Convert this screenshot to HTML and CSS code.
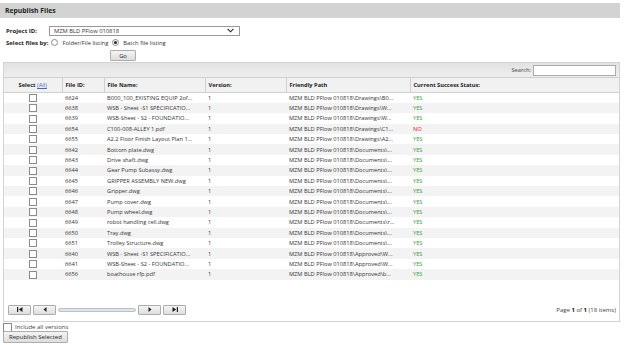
FILE: index.html
```html
<!DOCTYPE html>
<html lang="en">
<head>
    <meta charset="UTF-8">
    <title>Republish Files</title>
    <link rel="stylesheet" href="styles.css">
</head>
<body>

<div class="page-title">Republish Files</div>

<div class="filters">
    <div class="filter-row">
        <span class="filter-label">Project ID:</span>
        <div class="project-select">
            <span>MZM BLD PFlow 010818</span>
            <svg width="7" height="5" viewBox="0 0 7 5"><path d="M0.6 0.8 L3.5 3.8 L6.4 0.8" fill="none" stroke="#222" stroke-width="1.1"/></svg>
        </div>
    </div>
    <div class="filter-row mode-row">
        <span class="filter-label">Select files by:</span>
        <span class="radio"></span><span class="radio-text">Folder/File listing</span>
        <span class="radio checked"></span><span class="radio-text">Batch file listing</span>
    </div>
    <div class="go-row">
        <button class="btn go">Go</button>
    </div>
</div>

<div class="grid">
    <div class="grid-toolbar">
        <span>Search:</span>
        <input type="text" class="search-input">
    </div>

    <table class="files">
        <colgroup>
            <col style="width:58px">
            <col style="width:42px">
            <col style="width:101px">
            <col style="width:81px">
            <col style="width:124px">
            <col>
        </colgroup>
        <thead>
            <tr>
                <th class="center">Select <a href="#">(All)</a></th>
                <th>File ID:</th>
                <th>File Name:</th>
                <th>Version:</th>
                <th>Friendly Path</th>
                <th>Current Success Status:</th>
            </tr>
        </thead>
        <tbody>
            <tr><td class="center"><span class="check"></span></td><td>6624</td><td>B000_100_EXISTING EQUIP 2of...</td><td>1</td><td>MZM BLD PFlow 010818\Drawings\B0...</td><td class="yes">YES</td></tr>
            <tr><td class="center"><span class="check"></span></td><td>6638</td><td>WSB - Sheet -S1 SPECIFICATIO...</td><td>1</td><td>MZM BLD PFlow 010818\Drawings\W...</td><td class="yes">YES</td></tr>
            <tr><td class="center"><span class="check"></span></td><td>6639</td><td>WSB-Sheet - S2 - FOUNDATIO...</td><td>1</td><td>MZM BLD PFlow 010818\Drawings\W...</td><td class="yes">YES</td></tr>
            <tr><td class="center"><span class="check"></span></td><td>6654</td><td>C100-008-ALLEY 1.pdf</td><td>1</td><td>MZM BLD PFlow 010818\Drawings\C1...</td><td class="no">NO</td></tr>
            <tr><td class="center"><span class="check"></span></td><td>6655</td><td>A2.2 Floor Finish Layout Plan 1...</td><td>1</td><td>MZM BLD PFlow 010818\Drawings\A2...</td><td class="yes">YES</td></tr>
            <tr><td class="center"><span class="check"></span></td><td>6642</td><td>Bottom plate.dwg</td><td>1</td><td>MZM BLD PFlow 010818\Documents\...</td><td class="yes">YES</td></tr>
            <tr><td class="center"><span class="check"></span></td><td>6643</td><td>Drive shaft.dwg</td><td>1</td><td>MZM BLD PFlow 010818\Documents\...</td><td class="yes">YES</td></tr>
            <tr><td class="center"><span class="check"></span></td><td>6644</td><td>Gear Pump Subassy.dwg</td><td>1</td><td>MZM BLD PFlow 010818\Documents\...</td><td class="yes">YES</td></tr>
            <tr><td class="center"><span class="check"></span></td><td>6645</td><td>GRIPPER ASSEMBLY NEW.dwg</td><td>1</td><td>MZM BLD PFlow 010818\Documents\...</td><td class="yes">YES</td></tr>
            <tr><td class="center"><span class="check"></span></td><td>6646</td><td>Gripper.dwg</td><td>1</td><td>MZM BLD PFlow 010818\Documents\...</td><td class="yes">YES</td></tr>
            <tr><td class="center"><span class="check"></span></td><td>6647</td><td>Pump cover.dwg</td><td>1</td><td>MZM BLD PFlow 010818\Documents\...</td><td class="yes">YES</td></tr>
            <tr><td class="center"><span class="check"></span></td><td>6648</td><td>Pump wheel.dwg</td><td>1</td><td>MZM BLD PFlow 010818\Documents\...</td><td class="yes">YES</td></tr>
            <tr><td class="center"><span class="check"></span></td><td>6649</td><td>robot handling cell.dwg</td><td>1</td><td>MZM BLD PFlow 010818\Documents\r...</td><td class="yes">YES</td></tr>
            <tr><td class="center"><span class="check"></span></td><td>6650</td><td>Tray.dwg</td><td>1</td><td>MZM BLD PFlow 010818\Documents\...</td><td class="yes">YES</td></tr>
            <tr><td class="center"><span class="check"></span></td><td>6651</td><td>Trolley Structure.dwg</td><td>1</td><td>MZM BLD PFlow 010818\Documents\...</td><td class="yes">YES</td></tr>
            <tr><td class="center"><span class="check"></span></td><td>6640</td><td>WSB - Sheet -S1 SPECIFICATIO...</td><td>1</td><td>MZM BLD PFlow 010818\Approved\W...</td><td class="yes">YES</td></tr>
            <tr><td class="center"><span class="check"></span></td><td>6641</td><td>WSB-Sheet - S2 - FOUNDATIO...</td><td>1</td><td>MZM BLD PFlow 010818\Approved\W...</td><td class="yes">YES</td></tr>
            <tr><td class="center"><span class="check"></span></td><td>6656</td><td>boathouse rfp.pdf</td><td>1</td><td>MZM BLD PFlow 010818\Approved\b...</td><td class="yes">YES</td></tr>
        </tbody>
    </table>

    <div class="pager">
        <div class="pager-nav">
            <button class="btn pg"><svg width="6" height="5" viewBox="0 0 6 5"><rect x="0" y="0" width="1.2" height="5" fill="#222"/><path d="M5.5 0 L1.8 2.5 L5.5 5Z" fill="#222"/></svg></button>
            <button class="btn pg"><svg width="4" height="5" viewBox="0 0 4 5"><path d="M3.5 0 L0.5 2.5 L3.5 5Z" fill="#222"/></svg></button>
            <div class="pager-slider"></div>
            <button class="btn pg"><svg width="4" height="5" viewBox="0 0 4 5"><path d="M0.5 0 L3.5 2.5 L0.5 5Z" fill="#222"/></svg></button>
            <button class="btn pg"><svg width="6" height="5" viewBox="0 0 6 5"><path d="M0.5 0 L4.2 2.5 L0.5 5Z" fill="#222"/><rect x="4.8" y="0" width="1.2" height="5" fill="#222"/></svg></button>
        </div>
        <div class="pager-info">Page <b>1</b> of <b>1</b> (18 items)</div>
    </div>
</div>

<div class="options">
    <span class="check"></span>
    <span>Include all versions</span>
</div>
<button class="btn republish">Republish Selected</button>

</body>
</html>
```

FILE: styles.css
```css
body {
    font-family: "Open Sans", "DejaVu Sans", sans-serif;
    font-size: 5.7px;
    color: #333;
    margin: 0;
    padding: 3px 4px 0 0;
    background: #fff;
}

.page-title {
    height: 15px;
    line-height: 15px;
    background: #d3d3d3;
    padding-left: 5px;
    font-size: 6.8px;
    font-weight: bold;
    color: #222;
}

.filters {
    padding: 7px 0 0 6px;
}

.filter-row {
    display: flex;
    align-items: center;
    height: 11px;
}

.filter-label {
    width: 43px;
    font-weight: bold;
    color: #222;
    font-size: 6px;
}

.project-select {
    width: 191px;
    height: 10px;
    box-sizing: border-box;
    border: 1px solid #999;
    display: flex;
    align-items: center;
    justify-content: space-between;
    padding: 0 5px 0 4px;
    font-size: 5.8px;
    color: #333;
}

.mode-row {
    margin-top: 1px;
}

.mode-row .filter-label {
    width: auto;
    margin-right: 3px;
}

.radio {
    width: 7px;
    height: 7px;
    box-sizing: border-box;
    border: 1px solid #888;
    border-radius: 50%;
    margin-right: 4px;
    background: #fff;
    position: relative;
}

.radio.checked::after {
    content: "";
    position: absolute;
    left: 1px;
    top: 1px;
    width: 3px;
    height: 3px;
    border-radius: 50%;
    background: #222;
}

.radio-text {
    margin-right: 4px;
    color: #333;
    font-size: 5.8px;
}

.go-row {
    padding-left: 104px;
    margin-top: 2px;
}

.btn {
    font-family: inherit;
    font-size: 5.8px;
    color: #222;
    border: 1px solid #adadad;
    border-radius: 1px;
    background: linear-gradient(#f4f4f4, #dedede);
    padding: 0;
    cursor: pointer;
}

.btn.go {
    width: 26px;
    height: 11px;
}

.grid {
    margin: 1px 0 0 3px;
    border: 1px solid #d3d3d3;
    height: 258px;
    display: flex;
    flex-direction: column;
}

.grid-toolbar {
    height: 14px;
    flex: none;
    background: linear-gradient(#e2e2e2, #eeeeee);
    display: flex;
    align-items: center;
    justify-content: flex-end;
    padding-right: 3px;
    color: #444;
}

.search-input {
    width: 83px;
    height: 11px;
    box-sizing: border-box;
    border: 1px solid #aaa;
    margin-left: 2px;
    padding: 0;
}

.files {
    width: 100%;
    table-layout: fixed;
    border-collapse: collapse;
}

.files th {
    height: 14px;
    padding: 0 3px;
    text-align: left;
    font-weight: bold;
    color: #222;
    background: #f1f1f1;
    border-top: 1px solid #d0d0d0;
    border-bottom: 1px solid #d0d0d0;
    border-left: 1px solid #d0d0d0;
    white-space: nowrap;
}

.files th:first-child {
    border-left: none;
}

.files th a {
    color: #4a5fc4;
    font-weight: normal;
}

.files tbody tr {
    height: 10.4px;
}

.files td {
    padding: 0 3px;
    white-space: nowrap;
    overflow: hidden;
    color: #333;
    line-height: 8px;
}

.files tbody tr:nth-child(even) td {
    background: #f3f3f3;
}

.files .center {
    text-align: center;
}

.check {
    display: inline-block;
    width: 6px;
    height: 6px;
    border: 1px solid #8a8a8a;
    background: #fff;
    vertical-align: middle;
}

.files td.yes {
    color: #2fa336;
}

.files td.no {
    color: #e8201c;
}

.pager {
    margin-top: auto;
    height: 11px;
    margin-bottom: 6px;
    display: flex;
    align-items: center;
    justify-content: space-between;
    padding: 0 3px 0 4px;
}

.pager-nav {
    display: flex;
    align-items: center;
}

.btn.pg {
    width: 23px;
    height: 10px;
    margin-right: 2px;
    display: flex;
    align-items: center;
    justify-content: center;
}

.pager-slider {
    width: 76px;
    height: 2px;
    border: 1px solid #b9c3cf;
    border-radius: 2px;
    background: #dfe4ea;
    margin: 0 2px 0 0;
}

.pager-info {
    color: #444;
    font-size: 6px;
}

.pager-info b {
    color: #111;
}

.options {
    display: flex;
    align-items: center;
    margin: 1px 0 0 3px;
    height: 8px;
    color: #444;
    font-size: 6px;
}

.options .check {
    width: 7px;
    height: 7px;
    margin-right: 3px;
}

.btn.republish {
    margin: 0 0 0 3px;
    height: 12px;
    padding: 0 5px;
    font-size: 6px;
}
```
